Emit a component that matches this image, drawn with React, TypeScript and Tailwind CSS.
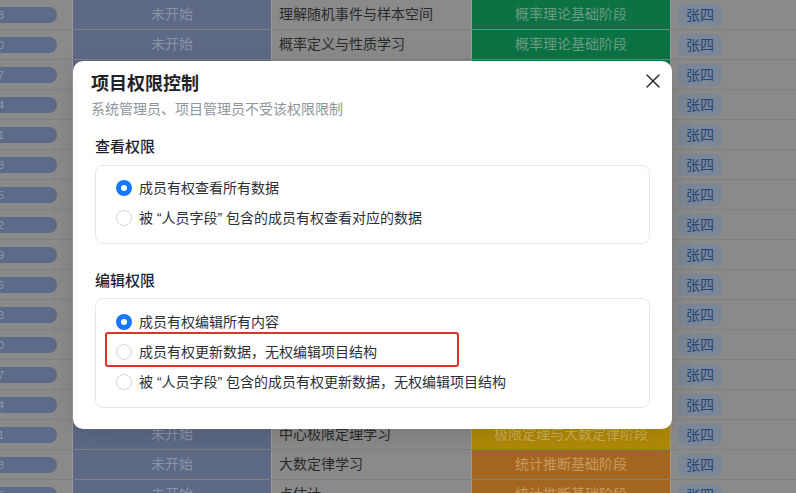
import React, { useState } from 'react';
import { X } from 'lucide-react';

type Stage = 'green' | 'yellow' | 'orange';

interface Row {
  task: string;
  stage: string;
  tone: Stage;
}

const rows: Row[] = [
  { task: '理解随机事件与样本空间', stage: '概率理论基础阶段', tone: 'green' },
  { task: '概率定义与性质学习', stage: '概率理论基础阶段', tone: 'green' },
  { task: '条件概率学习', stage: '概率理论基础阶段', tone: 'green' },
  { task: '全概率公式学习', stage: '概率理论基础阶段', tone: 'green' },
  { task: '贝叶斯公式学习', stage: '概率理论基础阶段', tone: 'green' },
  { task: '离散型随机变量', stage: '随机变量阶段', tone: 'green' },
  { task: '连续型随机变量', stage: '随机变量阶段', tone: 'green' },
  { task: '分布函数学习', stage: '随机变量阶段', tone: 'green' },
  { task: '多维随机变量', stage: '随机变量阶段', tone: 'green' },
  { task: '数学期望学习', stage: '数字特征阶段', tone: 'yellow' },
  { task: '方差学习', stage: '数字特征阶段', tone: 'yellow' },
  { task: '协方差与相关系数', stage: '数字特征阶段', tone: 'yellow' },
  { task: '切比雪夫不等式', stage: '极限定理与大数定律阶段', tone: 'yellow' },
  { task: '依概率收敛学习', stage: '极限定理与大数定律阶段', tone: 'yellow' },
  { task: '中心极限定理学习', stage: '极限定理与大数定律阶段', tone: 'yellow' },
  { task: '大数定律学习', stage: '统计推断基础阶段', tone: 'orange' },
  { task: '点估计', stage: '统计推断基础阶段', tone: 'orange' },
];

const toneClass: Record<Stage, string> = {
  green: 'bg-[#0b7243] text-[#6b9a83]',
  yellow: 'bg-[#b08a08] text-[#cdae57]',
  orange: 'bg-[#a5671f] text-[#c69960]',
};

const Radio = ({ checked }: { checked: boolean }) =>
  checked ? (
    <span className="w-4 h-4 rounded-full bg-[#1677ff] flex items-center justify-center shrink-0">
      <span className="w-[6px] h-[6px] rounded-full bg-white" />
    </span>
  ) : (
    <span className="w-4 h-4 rounded-full border border-[#d5d8dc] bg-white shrink-0" />
  );

const Option = ({
  label,
  checked,
  onClick,
  marked,
}: {
  label: string;
  checked: boolean;
  onClick: () => void;
  marked?: boolean;
}) => (
  <div className="relative h-[30px] flex items-center gap-[7px] cursor-pointer" onClick={onClick}>
    <Radio checked={checked} />
    <span className="text-[14px] text-[#2b2f36] leading-[20px]">{label}</span>
    {/* red annotation box */}
    {marked && (
      <span className="absolute left-[-11px] top-[-5px] w-[354px] h-[35px] border-2 border-[#e0312b] rounded-[3px] pointer-events-none" />
    )}
  </div>
);

export default function App() {
  const [view, setView] = useState(0);
  const [edit, setEdit] = useState(0);

  const viewOptions = ['成员有权查看所有数据', '被 “人员字段” 包含的成员有权查看对应的数据'];
  const editOptions = [
    '成员有权编辑所有内容',
    '成员有权更新数据，无权编辑项目结构',
    '被 “人员字段” 包含的成员有权更新数据，无权编辑项目结构',
  ];

  return (
    <div className="relative w-[796px] h-[493px] overflow-hidden bg-[#8a8a8a] font-['Liberation_Sans','Noto_Sans_CJK_SC',sans-serif]">
      {/* Table behind the mask (already dimmed) */}
      <div className="flex flex-col">
        {rows.map((r, i) => (
          <div key={i} className="h-[30px] flex shrink-0 border-b border-[#808080]">
            <div className="w-[73px] shrink-0 flex items-center border-r border-[#9a9a9a] overflow-hidden">
              <span className="ml-[-30px] w-[87px] h-[16px] rounded-full bg-[#5c6b87] text-[11px] leading-[16px] text-[#8e98ad] pl-[28px] shrink-0">
                {(i * 7 + 3) % 10}
              </span>
            </div>
            <div className="w-[199px] shrink-0 bg-[#5d6985] border-r border-[#9a9a9a] flex items-center justify-center text-[14px] text-[#8993a8]">
              未开始
            </div>
            <div className="w-[200px] shrink-0 flex items-center pl-[7px] text-[14px] text-[#2a2a2a] border-r border-[#9a9a9a]">
              {r.task}
            </div>
            <div
              className={`w-[199px] shrink-0 flex items-center justify-center text-[14px] border-r border-[#9a9a9a] ${toneClass[r.tone]}`}
            >
              {r.stage}
            </div>
            <div className="flex-1 flex items-center pl-[7px]">
              <span className="h-[22px] px-2 rounded-[6px] bg-[#7b8696] text-[14px] leading-[22px] text-[#24467c]">
                张四
              </span>
            </div>
          </div>
        ))}
      </div>

      {/* Modal */}
      <div className="absolute left-[73px] top-[61px] w-[599px] h-[368px] bg-white rounded-[10px] shadow-[0_6px_24px_rgba(0,0,0,0.12)] flex flex-col">
        <button className="absolute top-[8px] right-[7px] text-[#2b2f36]">
          <X size={24} strokeWidth={1.5} />
        </button>

        <div className="px-[18px] pt-[11px]">
          <h2 className="text-[18px] leading-[24px] font-bold text-[#1f2329]">项目权限控制</h2>
          <p className="mt-[3px] text-[14px] leading-[20px] text-[#8f959e]">系统管理员、项目管理员不受该权限限制</p>
        </div>

        <div className="px-[22px]">
          <h3 className="mt-[17px] text-[15px] leading-[22px] font-medium text-[#1f2329]">查看权限</h3>
          <div className="mt-[7px] border border-[#e6e8eb] rounded-[8px] pl-[20px] pt-[7px] pb-[10px]">
            {viewOptions.map((o, i) => (
              <Option key={i} label={o} checked={view === i} onClick={() => setView(i)} />
            ))}
          </div>

          <h3 className="mt-[26px] text-[15px] leading-[22px] font-medium text-[#1f2329]">编辑权限</h3>
          <div className="mt-[6px] border border-[#e6e8eb] rounded-[8px] pl-[20px] pt-[8px] pb-[10px]">
            {editOptions.map((o, i) => (
              <Option key={i} label={o} checked={edit === i} onClick={() => setEdit(i)} marked={i === 1} />
            ))}
          </div>
        </div>
      </div>
    </div>
  );
}
